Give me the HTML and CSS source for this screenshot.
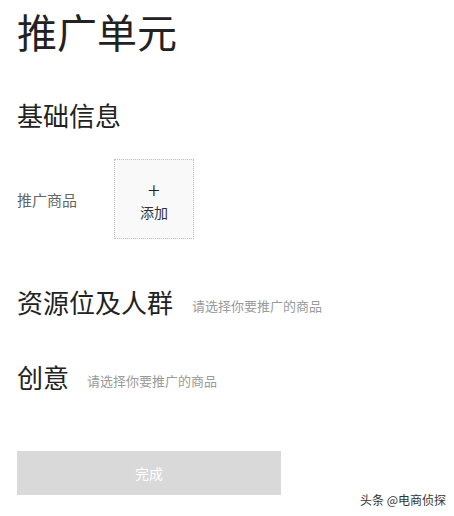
FILE: index.html
```html
<!DOCTYPE html>
<html lang="zh-CN">
<head>
<meta charset="utf-8">
<title>推广单元</title>
<link rel="stylesheet" href="styles.css">
</head>
<body>
<div class="page">
  <h1 class="title">推广单元</h1>
  <section class="section-basic">
    <h2 class="section-title">基础信息</h2>
    <div class="form-row">
      <span class="form-label">推广商品</span>
      <div class="upload">
        <span class="upload-plus">+</span>
        <span class="upload-text">添加</span>
      </div>
    </div>
  </section>
  <section class="section-inline section-resource">
    <h2 class="section-title">资源位及人群</h2>
    <span class="hint">请选择你要推广的商品</span>
  </section>
  <section class="section-inline section-creative">
    <h2 class="section-title">创意</h2>
    <span class="hint hint-near">请选择你要推广的商品</span>
  </section>
  <button class="submit" type="button">完成</button>
</div>
<div class="watermark">头条 @电商侦探</div>
</body>
</html>
```
FILE: styles.css
```css
html, body {
  margin: 0;
  padding: 0;
  background: #ffffff;
}
body {
  font-family: "Noto Sans CJK SC", "Noto Sans", sans-serif;
  color: #222;
  position: relative;
  width: 454px;
  height: 516px;
  overflow: hidden;
}
.page {
  padding: 3px 0 0 17px;
}
.title {
  margin: 0;
  font-size: 40px;
  line-height: 56px;
  font-weight: 400;
  color: #222;
}
.section-title {
  margin: 0;
  font-size: 26px;
  line-height: 36px;
  font-weight: 400;
  color: #222;
}
.section-basic {
  margin-top: 38px;
}
.form-row {
  margin-top: 26px;
  display: flex;
  align-items: center;
}
.form-label {
  width: 97px;
  font-size: 15px;
  color: #666;
}
.upload {
  width: 78px;
  height: 78px;
  border: 1px dotted #bbb;
  background: #f9f9f9;
  display: flex;
  flex-direction: column;
  align-items: center;
  justify-content: center;
}
.upload-plus {
  font-size: 22px;
  line-height: 18px;
  font-weight: 300;
  color: #222;
  margin-top: 4px;
}
.upload-text {
  font-size: 14px;
  line-height: 20px;
  margin-top: 4px;
  color: #333;
}
.section-inline {
  display: flex;
  align-items: center;
}
.section-resource {
  margin-top: 45px;
}
.section-creative {
  margin-top: 39px;
}
.hint {
  margin-left: 19px;
  font-size: 13px;
  line-height: 18px;
  padding-top: 7px;
  color: #9a9a9a;
}
.hint-near {
  margin-left: 18px;
}
.submit {
  display: block;
  margin-top: 56px;
  width: 264px;
  height: 44px;
  border: 0;
  background: #d9d9d9;
  color: #fff;
  font-family: "Noto Sans CJK SC", sans-serif;
  font-size: 14px;
  padding: 0;
}
.watermark {
  position: absolute;
  right: 8px;
  top: 491px;
  font-size: 12px;
  line-height: 18px;
  color: #333;
}
```
